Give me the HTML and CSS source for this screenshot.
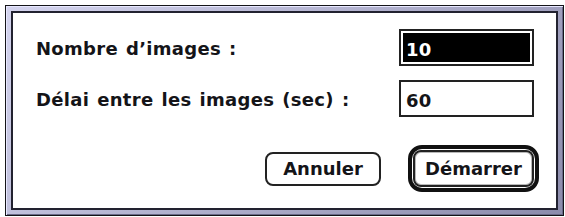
FILE: index.html
```html
<!DOCTYPE html>
<html lang="fr">
<head>
    <meta charset="UTF-8">
    <title>Démarrer</title>
    <link rel="stylesheet" href="styles.css">
</head>
<body>

<div class="dialog">
    <div class="dialog__panel">
        <div class="dialog__row">
            <span class="dialog__label">Nombre d’images :</span>
            <span class="field"><span class="field__text field__text--selected">10</span></span>
        </div>
        <div class="dialog__row">
            <span class="dialog__label">Délai entre les images (sec) :</span>
            <span class="field"><span class="field__text">60</span></span>
        </div>
        <div class="dialog__buttons">
            <button class="btn" type="button">Annuler</button>
            <span class="btn-ring">
                <button class="btn btn--default" type="button">Démarrer</button>
            </span>
        </div>
    </div>
</div>

</body>
</html>
```

FILE: styles.css
```css
* {
    box-sizing: border-box;
    margin: 0;
    padding: 0;
}

:root {
    --ink: #141418;
    --band-hi: #d4d4ee;
    --band-lo: #8c8cac;
}

body {
    background: #fff;
    font: bold 18px/1 "DejaVu Sans", sans-serif;
    letter-spacing: 0.3px;
    word-spacing: 1.5px;
    color: var(--ink);
    padding: 5px 1px 2px 5px;
}

/* cadre double façon Mac OS */
.dialog {
    width: 559px;
    height: 211px;
    border: 1px solid var(--ink);
    padding: 5px;
    background: linear-gradient(135deg, var(--band-hi), var(--band-lo));
    box-shadow: inset 1px 1px 0 #e8e8ff, inset -1px -1px 0 #6a6a88;
}

.dialog__panel {
    height: 100%;
    background: #fff;
    border: 2px solid #222230;
    padding: 16px 22px 0 23px;
    display: flex;
    flex-direction: column;
    gap: 14px;
}

.dialog__row {
    display: flex;
    align-items: center;
    justify-content: space-between;
}

.dialog__label {
    padding-top: 2px;
}

.field {
    display: block;
    width: 135px;
    height: 37px;
    border: 2px solid #222;
    padding: 2px;
}

.field__text {
    display: block;
    height: 100%;
    padding: 8px 0 0 3px;
}

.field__text--selected {
    background: #000;
    color: #fff;
}

.dialog__buttons {
    display: flex;
    align-items: center;
    justify-content: flex-end;
    gap: 27px;
    margin-top: 14px;
    margin-right: -5px;
}

.btn {
    font: inherit;
    color: inherit;
    background: #fff;
    width: 116px;
    height: 34px;
    border: 2px solid #222;
    border-radius: 8px;
    padding-top: 1px;
}

.btn-ring {
    display: block;
    border: 4px solid #111;
    border-radius: 14px;
    padding: 1px;
}

.btn--default {
    width: 121px;
    height: 37px;
    box-shadow: inset 0 0 0 1px #b8b8b8;
}
```
